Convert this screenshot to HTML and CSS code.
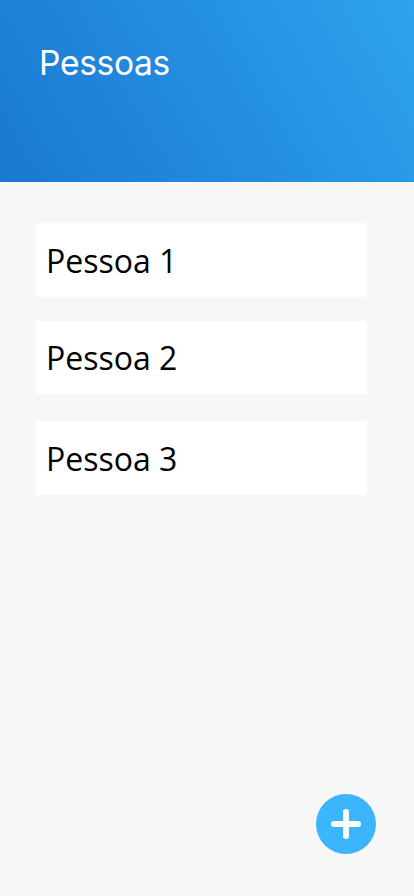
FILE: index.html
```html
<!DOCTYPE html>
<html lang="pt">
<head>
<meta charset="utf-8">
<title>Pessoas</title>
<link rel="stylesheet" href="styles.css">
</head>
<body>
<div class="app">
  <header class="header">
    <h1 class="title">Pessoas</h1>
  </header>
  <main class="list">
    <div class="card c1">Pessoa 1</div>
    <div class="card c2">Pessoa 2</div>
    <div class="card c3">Pessoa 3</div>
  </main>
  <button class="fab" aria-label="Adicionar">
    <svg width="30" height="30" viewBox="0 0 30 30"><path d="M15 3v24M3 15h24" stroke="#fff" stroke-width="6" stroke-linecap="round"/></svg>
  </button>
</div>
</body>
</html>
```
FILE: styles.css
```css
html, body { margin: 0; padding: 0; }
body { background: #f7f7f7; }
.app { position: relative; width: 414px; height: 896px; overflow: hidden; background: #f7f7f7; }
.header {
  height: 182px;
  box-sizing: border-box;
  padding: 39px 39px 0;
  background: linear-gradient(60deg, #1a78d0 0%, #238de0 50%, #2fa2ef 100%);
}
.title {
  margin: 0;
  font-family: Inter, "Noto Sans", sans-serif;
  font-weight: 400;
  font-size: 33.5px;
  line-height: 48px;
  color: #fff;
  letter-spacing: -0.3px;
}
.list {
  display: flex;
  flex-direction: column;
  padding: 41px 47px 0 36px;
}
.card {
  background: #fff;
  height: 74px;
  display: flex;
  align-items: center;
  padding-left: 10px;
  font-family: "Open Sans", sans-serif;
  font-size: 32px;
  color: #000;
}
.c2 { margin-top: 24px; height: 73px; }
.c3 { margin-top: 27px; }
.fab {
  position: absolute;
  left: 316px;
  top: 794px;
  width: 60px;
  height: 60px;
  border-radius: 50%;
  border: none;
  padding: 0;
  background: #3bb6fc;
  display: flex;
  align-items: center;
  justify-content: center;
}
.fab svg { display: block; }
```
